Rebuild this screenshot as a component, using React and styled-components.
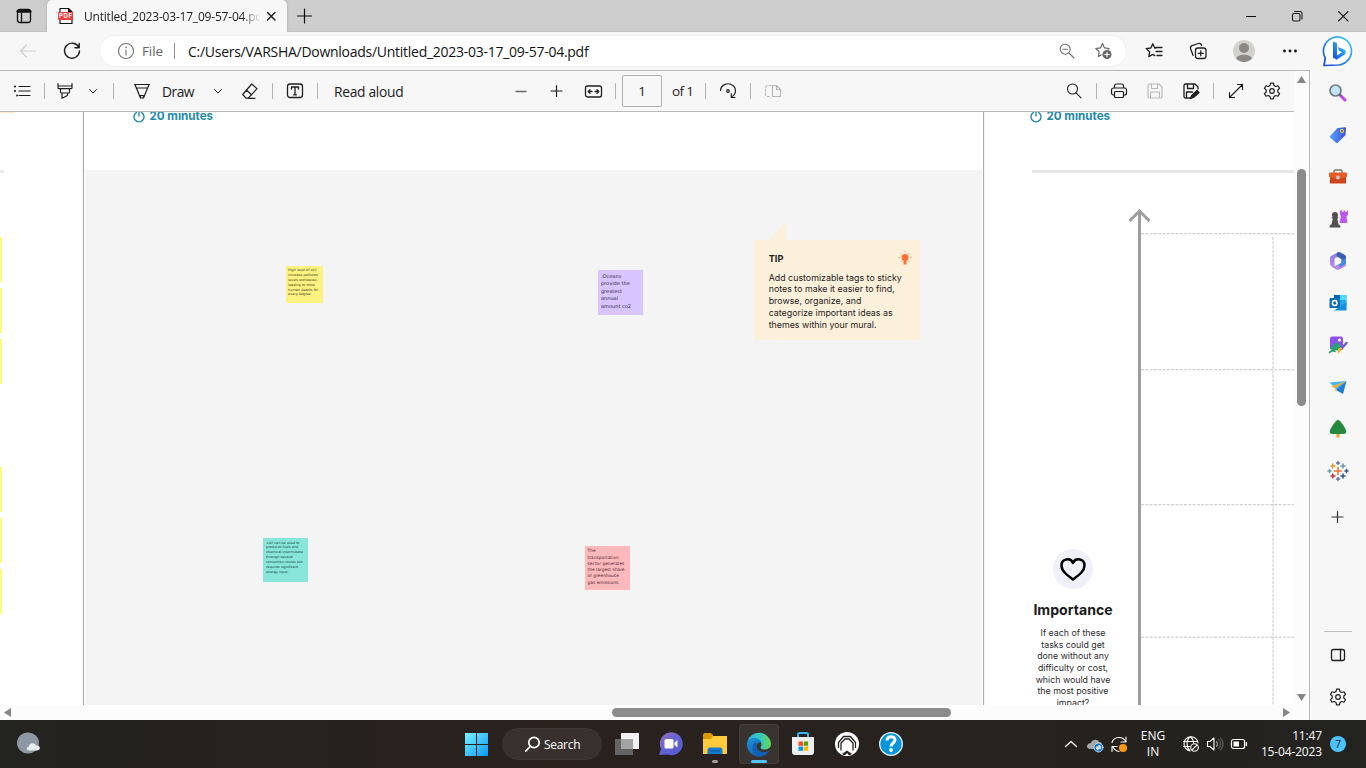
import React from 'react';
import styled, { createGlobalStyle } from 'styled-components';

const Global = createGlobalStyle`
  * { box-sizing: border-box; }
  body { margin: 0; overflow: hidden; background: #f7f7f7; }
  svg { display: block; flex: none; overflow: visible; }
`;

const ui = `'Open Sans', 'Noto Sans', sans-serif`;
const mural = `Inter, 'Liberation Sans', sans-serif`;

const Window = styled.div`
  width: 1366px; height: 768px; display: flex; flex-direction: column;
  font-family: ${ui}; color: #1b1b1b; background: #f7f7f7; overflow: hidden;
`;
const Icon = styled.svg.attrs(p => ({ width: p.$w || 20, height: p.$h || 20, viewBox: `0 0 ${p.$w || 20} ${p.$h || 20}` }))`
  margin-left: ${p => p.$ml ?? 0}px; margin-top: ${p => p.$mt ?? 0}px;
  fill: none; stroke: ${p => p.$c || '#1f1f1f'}; stroke-width: ${p => p.$sw || 1.1};
  stroke-linecap: ${p => p.$cap || 'round'}; stroke-linejoin: round;
`;
const Label = styled.span`
  flex: none; white-space: nowrap; margin-left: ${p => p.$ml || 0}px; width: ${p => p.$w}px;
  font-size: ${p => p.$size || 13.8}px; letter-spacing: ${p => p.$ls || 0}px; color: ${p => p.$c || '#1b1b1b'};
`;
const Divider = styled.span`
  flex: none; width: 1px; height: ${p => p.$h || 16}px; background: ${p => p.$c || '#b3b3b3'}; margin-left: ${p => p.$ml}px;
`;
const Spacer = styled.span`flex: ${p => (p.$w ? `0 0 ${p.$w}px` : '1')};`;

const TabStrip = styled.header`
  height: 32px; flex: none; display: flex; align-items: center; background: #cdcdcd;
  box-shadow: inset 0 -1px 0 #c2c2c2;
`;
const Tab = styled.div`
  margin-left: 13px; width: 240px; height: 32px; display: flex; align-items: center;
  background: #f7f7f7; border-radius: 5px 5px 0 0; z-index: 1; box-shadow: 0 0 2px #0004; clip-path: inset(0 -3px 0 -3px);
`;
const TabTitle = styled(Label)`
  overflow: hidden; mask-image: linear-gradient(90deg, #000 158px, transparent 176px);
`;
const AddressRow = styled.div`height: 38px; flex: none; display: flex; align-items: center;`;
const AddressPill = styled.div`
  margin-left: 18px; width: 1026px; height: 30px; border-radius: 15px; background: #fff;
  display: flex; align-items: center; box-shadow: 0 0 3px #00000012;
`;
const Body = styled.div`height: 650px; flex: none; display: flex;`;
const Viewer = styled.main`
  width: 1310px; border-top: 1px solid #b8b8b8; border-right: 1px solid #b8b8b8; display: flex; background: #fcfcfc;
`;
const Document = styled.div`width: 1294px; display: flex; flex-direction: column;`;
const PdfBar = styled.div`
  height: 41px; flex: none; display: flex; align-items: center; background: #f7f7f7; border-bottom: 1px solid #b8b8b8;
`;
const PageBox = styled.div`
  flex: none; width: 40px; height: 32px; margin-left: 6px; border: 1px solid #b0b0b0; border-radius: 2px;
  display: flex; align-items: center; justify-content: center; font-size: 13.5px;
`;
const Page = styled.div`
  height: 593px; flex: none; display: flex; position: relative; overflow: hidden; background: #fff; font-family: ${mural};
`;
const LeftPanel = styled.section`width: 83px; flex: none;`;
const Strip = styled.div`
  width: ${p => p.$w}px; height: ${p => p.$h}px; background: ${p => p.$bg}; margin-top: ${p => p.$mt || 0}px;
`;
const Board = styled.section`
  width: 901px; flex: none; border: solid #acacac; border-width: 0 1px; box-shadow: 0 0 1px #bbb; padding: 0 1px;
`;
const BoardHead = styled.div`height: 58px; padding-left: ${p => p.$pl}px; display: flex;`;
const Timer = styled.div`
  display: flex; align-items: center; height: 7px; gap: 4.5px; color: #2189ab; font-size: 11.6px; font-weight: 700;
  white-space: nowrap;
`;
const BoardArea = styled.div`height: 535px; background: #f4f4f4;`;
const RightPanel = styled.section`width: 310px; flex: none;`;
const Rule = styled.div`height: 3px; margin-left: 48px; background: #e6e6e6;`;
const MatrixRow = styled.div`display: flex; height: 532px;`;
const Axis = styled.div`
  width: 154px; flex: none; padding: 375.5px 21px 0 45px; display: flex; flex-direction: column; align-items: center;
`;
const HeartBadge = styled.div`
  width: 40px; height: 40px; border-radius: 50%; background: #f0f0fa; display: flex; align-items: center; justify-content: center; flex: none;
`;
const AxisTitle = styled.div`
  margin-top: 12.5px; font-size: 14.1px; line-height: 18px; font-weight: 700; color: #1b1b1b; white-space: nowrap;
`;
const AxisText = styled.div`
  margin-top: 8px; font-size: 8.8px; line-height: 11.65px; text-align: center; white-space: nowrap; color: #2b2b2b;
`;
const Sticky = styled.div`
  position: absolute; left: ${p => p.$x}px; top: ${p => p.$y}px; width: ${p => p.$s}px; height: ${p => p.$s}px;
  background: ${p => p.$bg}; padding: ${p => p.$pt}px 0 0 2.6px; font-size: ${p => p.$f}px; line-height: ${p => p.$lh}px;
  font-family: 'DejaVu Sans', 'Liberation Sans', sans-serif; white-space: nowrap; color: ${p => p.$c};
`;
const Tip = styled.div`
  position: absolute; left: 754.4px; top: 127.5px; width: 165.4px; height: 100px; background: #fdf0da;
  padding: 13px 0 0 14.3px; font-size: 8.85px; line-height: 11.7px; color: #1d1d1d; white-space: nowrap;
`;
const TipPointer = styled.svg`position: absolute; left: 15px; top: -17.5px;`;
const TipBulb = styled.svg`position: absolute; right: 8px; top: 11px;`;
const TipTitle = styled.div`font-weight: 700; font-size: 9.2px; margin-bottom: 7.5px;`;

const HScroll = styled.div`height: 15px; flex: none; display: flex; align-items: center;`;
const VScroll = styled.div`width: 15px; display: flex; flex-direction: column; align-items: center;`;
const Thumb = styled.div`
  flex: none; border-radius: 5px; background: #8b8b8b; width: ${p => p.$w}px; height: ${p => p.$h}px;
  margin: ${p => p.$m};
`;
const Sidebar = styled.aside`
  width: 56px; display: flex; flex-direction: column; align-items: center; padding-top: 12.5px; gap: 22px;
`;
const SideRule = styled.div`width: 28px; height: 1px; background: #bdbdbd; margin-top: 82px; margin-bottom: -9px;`;

const Taskbar = styled.footer`
  height: 48px; flex: none; background: linear-gradient(90deg, #23231f, #2a211d 40%, #28221e 60%, #23231f); display: flex; align-items: center; color: #fff;
`;
const SearchPill = styled.div`
  width: 100px; height: 32px; border-radius: 16px; margin: 0 1px 0 13px; background: #37302d; border: 1px solid #3d3734;
  display: flex; align-items: center;
`;
const AppSlot = styled.div`
  width: 40px; height: 40px; margin-left: 4px; border-radius: 4px; display: flex; align-items: center; justify-content: center;
  position: relative; background: ${p => (p.$active ? '#3a3431' : 'transparent')}; box-shadow: ${p => (p.$active ? 'inset 0 0 0 1px #433d3a' : 'none')};
  &::after {
    content: ''; position: absolute; bottom: 1px; height: 3px; border-radius: 2px;
    width: ${p => (p.$active ? 16 : p.$open ? 6 : 0)}px; background: ${p => (p.$active ? '#4cc2ff' : '#a09c9a')};
  }
`;
const TwoLine = styled.div`
  flex: none; width: ${p => p.$w}px; margin-left: ${p => p.$ml}px; font-size: 12px; line-height: 16px; text-align: ${p => p.$align};
  letter-spacing: ${p => p.$ls || 0}px; white-space: nowrap;
`;
const Count = styled.div`
  width: 16px; height: 16px; margin-left: 8px; border-radius: 50%; background: #4cc2ff; color: #111; font-size: 10px;
  line-height: 16px; text-align: center;
`;

const gearPath = 'M8.6 2.2h2.8l.6 2.3 1.7 1 2.3-.7 1.5 2.6-1.7 1.6v2l1.7 1.6-1.5 2.6-2.3-.7-1.7 1-.6 2.3H8.6L8 15.500l-1.700-1-2.300.7-1.500-2.600L4.200 11V9L2.500 7.400 4 4.800l2.300.7 1.700-1z';
const Gear = p => <Icon {...p}><path d={gearPath} /><circle cx="10" cy="10" r="2.300" /></Icon>;
const Chevron = p => <Icon $w={10} $h={10} $sw={1} {...p}><path d="M1.500 3.500 5 7l3.500-3.500" /></Icon>;
const Search = p => <Icon {...p}><circle cx="8.500" cy="8" r="5" /><path d="m12 11.800 5 5" /></Icon>;
const Plus = p => <Icon $sw={1.2} {...p}><path d="M9.500 4.500v11M4 10h11" /></Icon>;
const starPath = 'm8.500 2.500 2 4.400 4.700.6-3.400 3.300.8 4.700-4.100-2.300-4.100 2.300.8-4.700L1.800 7.500l4.700-.6z';

function BrowserTabs() {
  return (
    <TabStrip>
      <Icon $ml={14} $sw={1.3} $c="#111"><rect x="3.500" y="3.500" width="13" height="13" rx="2.500" /><path d="M4 5.200h12" strokeWidth="3" /><path d="M7.500 6v10" /></Icon>
      <Tab>
        <Icon $ml={10} $w={18} $h={18} $sw={1.2}>
          <path d="M3 5V1.500h8.500L15 5v11.500H3V13" fill="#fff" stroke="#111" /><path d="M11 1.500V5h4z" fill="#111" stroke="none" />
          <rect x="1" y="5" width="15" height="8" rx="1" fill="#f23c3c" stroke="none" />
          <text x="2" y="11.300" fontSize="6" fontWeight="700" fill="#fff" stroke="none" fontFamily="Inter" textLength="13">PDF</text>
        </Icon>
        <TabTitle $ml={9} $w={176} $size={12} $ls={-0.2}>Untitled_2023-03-17_09-57-04.pdf</TabTitle>
        <Icon $ml={1} $sw={1.5}><path d="m6.500 6.500 7.500 7.500M14 6.500 6.500 14" /></Icon>
      </Tab>
      <Icon $ml={8} $sw={1.2} $c="#111"><path d="M9.500 3v14M2.500 10h14" /></Icon>
      <Spacer />
      <Icon $sw={1} $c="#111" $cap="butt"><path d="M5 10.500h10" /></Icon>
      <Icon $ml={26}><rect x="5.500" y="7.500" width="7.500" height="7.500" rx="1.500" /><path d="M7.500 5.500h5.500a2 2 0 0 1 2 2v5.500" /></Icon>
      <Icon $ml={26}><path d="m5.500 5.500 9.500 9.500M15 5.500 5.500 15" /></Icon>
      <Spacer $w={13} />
    </TabStrip>
  );
}

function AddressBar() {
  return (
    <AddressRow>
      <Icon $ml={18} $c="#cfcfcf"><path d="M17.500 10h-15m6-6-6 6 6 6" /></Icon>
      <Icon $ml={24} $sw={1.4}><path d="M16.800 6.500A7.500 7.500 0 1 0 17.500 10M17.200 2.500v4.300H13" /></Icon>
      <AddressPill>
        <Icon $ml={16} $c="#707070"><circle cx="10" cy="10" r="7.500" /><path d="M10 9v5" /><path d="M10 6.300v.1" strokeWidth="1.500" /></Icon>
        <Label $ml={6} $w={22} $c="#666" $size={13.5} $ls={-0.1}>File</Label>
        <Divider $ml={10} $c="#8f8f8f" />
        <Label $ml={13} $w={402} $c="#111" $size={14} $ls={-0.27}>C:/Users/VARSHA/Downloads/Untitled_2023-03-17_09-57-04.pdf</Label>
        <Spacer />
        <Icon $c="#707070"><circle cx="8.200" cy="8.200" r="5" /><path d="m12 12 5 5M6 8.200h4.500" /></Icon>
        <Icon $ml={16} $c="#606060"><path d={starPath} transform="translate(1 0)" /><circle cx="14" cy="13.500" r="5.300" fill="#fff" stroke="none" /><circle cx="14" cy="13.500" r="4.500" fill="#666" stroke="none" /><path d="M14 11.200v4.600M11.700 13.500h4.600" stroke="#fff" /></Icon>
        <Spacer $w={13} />
      </AddressPill>
      <Icon $ml={18} $sw={1.3}><path d="M12 7 10.700 7 8.800 2.800 6.800 7 2.200 7.600l3.400 3.200-.8 4.800 4-2.200 2 1.200M12 6.500h6M12 10.500h6M13 14.500h5" /></Icon>
      <Icon $ml={24} $sw={1.3}><rect x="7.500" y="7" width="10.500" height="10.500" rx="2.500" /><path d="M12.800 9.800v5M10.300 12.300h5M5 14.300 2.600 7.800C2 6 2.700 5.200 4 4.600l6.300-2.100c1.500-.5 2.800.3 3.200 1.800" /></Icon>
      <Icon $ml={25} $w={22} $h={22}><circle cx="11" cy="11" r="11" fill="#d3d1ce" stroke="none" /><circle cx="11" cy="8" r="5" fill="#8b8784" stroke="none" /><path d="M3 18.500c2-5 14-5 16 0a11 11 0 0 1-16 0z" fill="#8b8784" stroke="none" /></Icon>
      <Icon $ml={25}><g fill="#111" stroke="none"><circle cx="4.500" cy="10" r="1.400" /><circle cx="10" cy="10" r="1.400" /><circle cx="15.500" cy="10" r="1.400" /></g></Icon>
      <Icon $ml={23} $w={30} $h={30}>
        <defs><linearGradient id="bing" x1="0" y1="1" x2="1" y2="0"><stop stopColor="#1744d8" /><stop offset=".5" stopColor="#258df0" /><stop offset="1" stopColor="#42d3e8" /></linearGradient></defs>
        <path d="M1 29.500 2.300 22A14 14 0 1 1 15.500 29z" fill="#fff" stroke="url(#bing)" strokeWidth="1.700" />
        <path d="M10 5.500l4 1.500v12.500l5-3.200-3-1.500-1.200-3.800 7.700 3v4l-9 5.700-3.500-2.200z" fill="url(#bing)" stroke="none" />
      </Icon>
    </AddressRow>
  );
}

function PdfToolbar() {
  return (
    <PdfBar>
      <Icon $ml={12} $sw={1.2}><path d="M7 5.500h11M7 10h11M7 14.500h11" /><g fill="#222" stroke="none"><circle cx="3" cy="5.500" r="1.100" /><circle cx="3" cy="10" r="1.100" /><circle cx="5" cy="14.500" r="1" /></g></Icon>
      <Divider $ml={12} />
      <Icon $ml={10} $sw={1.2}><path d="M3 2.500v4.200c0 .6.400 1 1 1h12c.6 0 1-.4 1-1V2.500M5.500 8v3c0 .6.400 1 1 1h7c.6 0 1-.4 1-1V8M7 12.200v5l5.500-2.700v-2.300M3.500 5h13" /></Icon>
      <Chevron $ml={13} />
      <Divider $ml={15} />
      <Icon $ml={18} $sw={1.2}><path d="M2.500 3.500h15M3 3.500l1.200 3L8.500 17h3l4.300-10.500 1.200-3M4.300 7h11.400M8.500 14.500v2.500h3v-2.500z" /></Icon>
      <Label $ml={10} $w={32} $ls={-0.5}>Draw</Label>
      <Chevron $ml={19} />
      <Icon $ml={17} $sw={1.2}><path d="m11.700 3 5.300 4.700-8.800 9.500H6L2.700 13.500zM6.300 9l5.300 4.800M8.500 17.300H15" /></Icon>
      <Divider $ml={12} />
      <Icon $ml={12} $sw={1.3}><rect x="2.500" y="3" width="15" height="13.500" rx="2.500" /><path d="M6.500 8V6h7v2M10 6v7.800M8.500 13.800h3" /></Icon>
      <Divider $ml={12} />
      <Label $ml={16} $w={70} $ls={-0.3}>Read aloud</Label>
      <Icon $ml={107} $sw={1.3}><path d="M5 10.500h10" stroke="#666" /></Icon>
      <Plus $ml={16} />
      <Icon $ml={16} $sw={1.3}><rect x="2.500" y="5" width="16" height="11" rx="2" /><path d="M5.500 10.500H9M12 10.500h3.500M7 8.800l-1.800 1.700L7 12.200M14 8.800l1.800 1.700-1.800 1.700" /></Icon>
      <Divider $ml={12} />
      <PageBox>1</PageBox>
      <Label $ml={10} $w={21} $size={13.5} $ls={-0.6}>of 1</Label>
      <Divider $ml={12} />
      <Icon $ml={12} $sw={1.2}><path d="M2.500 9.500A7.500 7 0 1 1 13.500 16M13.300 12.500v4h3.800" /><circle cx="10" cy="10" r="1.300" /></Icon>
      <Divider $ml={12} />
      <Icon $ml={12} $c="#b5b5b5"><path d="M8 4.500H4.500a2 2 0 0 0-2 2v7a2 2 0 0 0 2 2H8" strokeDasharray="2 2" /><path d="M9.500 4.500h4l4 4v7h-8zM13.500 4.500v4h4" /></Icon>
      <Spacer />
      <Search />
      <Divider $ml={12} />
      <Icon $ml={12} $sw={1.2}><path d="M5.500 7V5a2 2 0 0 1 2-2h5a2 2 0 0 1 2 2v2M5 14H4.500a2 2 0 0 1-2-2V9a2 2 0 0 1 2-2h11a2 2 0 0 1 2 2v3a2 2 0 0 1-2 2H15" /><rect x="5.500" y="10.500" width="9" height="6" rx="1" /></Icon>
      <Icon $ml={16} $c="#b8b8b8"><path d="M3 4.500A1.500 1.500 0 0 1 4.500 3H14l3 3v9.500a1.500 1.500 0 0 1-1.500 1.500h-11A1.500 1.500 0 0 1 3 15.500zM6.500 3v4.500h6V3M5.500 17v-6h9v6" /></Icon>
      <Icon $ml={16} $sw={1.3}><path d="M9 17H4.500A1.500 1.500 0 0 1 3 15.500v-11A1.500 1.500 0 0 1 4.500 3H14l3 3v2M6.500 3v4.500h6V3M5.500 17v-6h6" /><path d="m9.500 17.500 1-2.700 5.500-5.300 2 2-5.500 5z" fill="#222" /></Icon>
      <Divider $ml={12} />
      <Icon $ml={12} $sw={1.2}><path d="m3.500 16.500 13-13M11.500 3.500h5v5M3.500 11.500v5h5" /></Icon>
      <Gear $ml={16} $sw={1.2} />
      <Spacer $w={12} />
    </PdfBar>
  );
}

const Clock = () => (
  <Icon $w={12} $h={12} $c="#2189ab" $sw={1.4}><path d="M3.500 2.500a5 5 0 1 0 5 0M6 1v5" /></Icon>
);

const notes = [
  { x: 285.5, y: 154, s: 37, bg: '#fdf17f', f: 3.4, lh: 4.82, pt: 2.3, c: '#3a3722', text: ['High level of co2', 'increase pollution', 'levels worldwide,', 'leading to more', 'human deaths for', 'every degree'] },
  { x: 598.3, y: 158.3, s: 44.5, bg: '#d8c5ff', f: 5.05, lh: 7.45, pt: 2.7, c: '#2f293f', text: ['.Oceans', 'provide the', 'greatest', 'annual', 'amount co2'] },
  { x: 263.4, y: 425.5, s: 44.5, bg: '#87e6d9', f: 3.4, lh: 4.85, pt: 3, c: '#1b403b', text: ['.co2 can be used to', 'produces fuels and', 'chemical intermidiate', 'through several', 'convertion routes but', 'requires significant', 'energy input.'] },
  { x: 585, y: 433.5, s: 44.5, bg: '#ffb9bd', f: 4.35, lh: 6.25, pt: 2.8, c: '#472a2c', text: ['The', 'transportation', 'sector generates', 'the largest share', 'of greenhouse', 'gas emissions.'] },
];
const Lines = ({ of }) => of.map(t => <div key={t}>{t}</div>);

function MuralPage() {
  return (
    <Page>
      <LeftPanel>
        <Strip $w={14} $h={1} $bg="#fdebc8" />
        <Strip $w={4} $h={3} $bg="#e8e8e8" $mt={57} />
        <Strip $w={2} $h={45} $bg="#fdfb7c" $mt={64.3} />
        <Strip $w={2} $h={45} $bg="#fdfb7c" $mt={6} />
        <Strip $w={2} $h={45} $bg="#fdfb7c" $mt={6} />
        <Strip $w={2} $h={45} $bg="#fdfb7c" $mt={82.3} />
        <Strip $w={2} $h={45} $bg="#fdfb7c" $mt={6} />
        <Strip $w={2} $h={45} $bg="#fdfb7c" $mt={6} />
      </LeftPanel>
      <Board>
        <BoardHead $pl={48}><Timer><Clock />20 minutes</Timer></BoardHead>
        <BoardArea />
      </Board>
      <RightPanel>
        <BoardHead $pl={46}><Timer><Clock />20 minutes</Timer></BoardHead>
        <Rule />
        <MatrixRow>
          <Axis>
            <HeartBadge><Icon $w={28} $h={28} $c="#000" $sw={2.5}><path d="M14 24.500C8 20 2.500 16 2.500 10.500A6 6 0 0 1 14 8a6 6 0 0 1 11.500 2.500C25.500 16 20 20 14 24.500z" /></Icon></HeartBadge>
            <AxisTitle>Importance</AxisTitle>
            <AxisText><Lines of={['If each of these', 'tasks could get', 'done without any', 'difficulty or cost,', 'which would have', 'the most positive', 'impact?']} /></AxisText>
          </Axis>
          <Icon $w={156} $h={532} $c="#9d9d9d" $sw={3} $cap="butt">
            <path d="M1.500 38v500" /><path d="M-8.500 48 1.500 38l10 10" strokeLinejoin="miter" />
            <path d="M3 60.700h153M3 196.700h153M3 331.700h153M3 464.200h153M135 64v470" stroke="#c6c6c6" strokeWidth="1" strokeDasharray="3 1.300" />
          </Icon>
        </MatrixRow>
      </RightPanel>
      {notes.map(n => (
        <Sticky key={n.bg} $x={n.x} $y={n.y} $s={n.s} $bg={n.bg} $f={n.f} $lh={n.lh} $pt={n.pt} $c={n.c}><Lines of={n.text} /></Sticky>
      ))}
      <Tip>
        <TipPointer width="17" height="18"><path d="M0 18 17 0v18z" fill="#fdf0da" /></TipPointer>
        <TipBulb width="14" height="15" viewBox="0 0 14 15"><circle cx="7" cy="6.500" r="3.500" fill="#ff7139" /><path d="M5.500 9h3v4.500h-3z" fill="#ff7139" /><path d="M7 0v1.500M2.500 2l1 1M11.500 2l-1 1M.5 6.500H2M12 6.500h1.500M2.500 11l1-1M11.500 11l-1-1" stroke="#ff9d73" fill="none" /></TipBulb>
        <TipTitle>TIP</TipTitle>
        <Lines of={['Add customizable tags to sticky', 'notes to make it easier to find,', 'browse, organize, and', 'categorize important ideas as', 'themes within your mural.']} />
      </Tip>
    </Page>
  );
}

function EdgeSidebar() {
  return (
    <Sidebar>
      <Icon><path d="m11 11 6 6" stroke="#c23ff0" strokeWidth="3" /><path d="m11 11 1.500 1.500" stroke="#666" strokeWidth="2" /><circle cx="7.500" cy="7.500" r="5.500" fill="#bfe5fa" stroke="#737a80" strokeWidth="1.700" /></Icon>
      <Icon><defs><linearGradient id="tag"><stop stopColor="#5aa4f8" /><stop offset="1" stopColor="#3c50dc" /></linearGradient></defs><path d="m2 11 7.500-8L17 2.300c.8 0 1 .3 1 1L17.500 10l-7.500 7.500c-.8.8-1.500.8-2.300 0L2 12.500c-.5-.5-.5-1 0-1.500z" fill="url(#tag)" stroke="none" /><circle cx="14" cy="6" r="1.500" fill="#405ab8" stroke="#ffd72e" /></Icon>
      <Icon><path d="M6 6V4.500C6 3.500 6.500 3 7.500 3h5c1 0 1.500.5 1.500 1.500V6" stroke="#777" strokeWidth="1.500" /><path d="M2 16.500h16V9H2z" fill="#cf431d" stroke="none" /><path d="M1 6.500q0-1 1-1h16q1 0 1 1V10q-9 3-18 0z" fill="#e85d26" stroke="none" /><circle cx="10" cy="10.500" r="1.900" fill="#c6ccd0" stroke="none" /></Icon>
      <Icon><path d="M12 1.500h2V3h1.500V1.500h1.700V3H19V1.500h1V6l-1.500 1 .8 7H11.500L13 7l-1-1z" fill="#bd57f0" stroke="none" /><g fill="#505050" stroke="none"><circle cx="7" cy="6" r="3" /><path d="M5 8.500h4l1.500 7H3.500zM1.500 18.500q0-3 2-3h7q2 0 2 3z" /><rect x="3.700" y="8" width="6.600" height="1.500" rx=".7" /></g></Icon>
      <Icon>
        <defs><linearGradient id="office" x1="0" y1="0" x2="0" y2="1"><stop stopColor="#8a7cf0" /><stop offset="1" stopColor="#b98ce0" /></linearGradient></defs>
        <g stroke="none">
          <path d="M10.500 1 4 4.500C2.500 5.300 2 6 2 7.500v5c0 1.500.5 2 2 3l2.500 1.300V8.300q0-1 1-1.500L13 4z" fill="url(#office)" />
          <path d="M10 1q1-.3 2 .2L17 4q1 .7 1 2v6.500l-4.500-2V8.300L9 5.500q-1-3 1-4.500z" fill="#3a5fae" />
          <path d="M18 9v4.500q0 1.300-1 2l-5.500 3q-1.500.7-3 0L3.500 15.700l6.500-2 4-3.200z" fill="#b48ae0" />
          <path d="M18 7v5.500L12.500 16 10 14l3.500-2V9z" fill="#418bdf" />
          <path d="m10 6.700 3 1.700v3.300l-3 1.700-3-1.700V8.400z" fill="#f7f7f7" />
        </g>
      </Icon>
      <Icon><g stroke="none"><rect x="6" y="2" width="12.500" height="11" fill="#28a8ea" /><path d="M12 2h6.500v5H12z" fill="#50d9ff" /><path d="M6 2h6v5H6z" fill="#0364b8" /><path d="M6 17.500h12.500V9L12 13.500z" fill="#1490df" /><rect x="1.500" y="5" width="10.500" height="10" rx="1" fill="#0f6cbd" /></g><ellipse cx="6.700" cy="10" rx="2.300" ry="2.500" stroke="#fff" strokeWidth="1.500" /></Icon>
      <Icon><rect x="2" y="1.500" width="13" height="13" rx="2" fill="#8d52ee" stroke="none" /><path d="m2 13 5.500-5c1-1 2-1 3 0l5 6q-5 3-13.500 0z" fill="#25a26f" stroke="none" /><circle cx="11.500" cy="5" r="1.500" fill="#fff" stroke="none" /><path d="m18.500 8-5.500 6" stroke="#7556dc" strokeWidth="2.500" /><path d="m13.500 13.500-3 4.500q-.5-4 1.500-5z" fill="#ffad21" stroke="#ffad21" /><path d="M1.500 17.500q3-3 5.500-1" stroke="#22986a" strokeWidth="1.600" /></Icon>
      <Icon><path d="M1.500 5.500 18.500 4 9 13z" fill="#42b8f4" stroke="none" /><path d="M18.500 4 15 17l-7-4z" fill="#237bd8" stroke="none" /><path d="M3 9.500 18.500 4 7.500 11v5l-1-5z" fill="#ffae25" stroke="none" /></Icon>
      <Icon><path d="M8.500 14h3v4.500h-3z" fill="#f6a221" stroke="none" /><path d="M8 2q2-2 4 0 3.500 4 5.500 8 2.500 5-2.500 5H5q-5 0-2.500-5Q4.500 6 8 2z" fill="#24893e" stroke="none" /></Icon>
      <Icon $sw={1.5}><path d="M10 6.500v7M6.500 10h7" stroke="#eb7330" /><path d="M10 .5v3M8.500 2h3M10 16.500v3M8.500 18h3" stroke="#6075a8" /><path d="M4.800 3v4M3 5h4" stroke="#e59a2d" /><path d="M15 3v4M13 5h4M1.500 8.500v3M0 10h3" stroke="#679ba8" /><path d="M4.800 13v4M3 15h4" stroke="#c63245" /><path d="M15 13v4M13 15h4M18.500 8.500v3M17 10h3" stroke="#31558d" /></Icon>
      <Plus $mt={4.5} $c="#333" />
      <SideRule />
      <Icon $sw={1.3}><rect x="3.500" y="4.500" width="13" height="11" rx="2" /><path d="M12.500 4.500v11" /></Icon>
      <Gear $sw={1.2} />
    </Sidebar>
  );
}

function WindowsTaskbar() {
  return (
    <Taskbar>
      <Icon $ml={16} $w={25} $h={24}><ellipse cx="12" cy="11" rx="11" ry="10.500" fill="#8e98a3" stroke="none" /><path d="M13 18.500c-3 0-3-4 0-4 0-4 6-4 7-1 5-.5 5 5 1 5z" fill="#e8edf1" stroke="none" /></Icon>
      <Icon $ml={423} $w={25} $h={24}><defs><linearGradient id="win" x1="0" y1="0" x2="1" y2="1"><stop stopColor="#7af3ff" /><stop offset="1" stopColor="#0798f8" /></linearGradient></defs><path d="M1 1h11v11H1zM13 1h11v11H13zM1 13h11v11H1zM13 13h11v11H13z" fill="url(#win)" stroke="none" /></Icon>
      <SearchPill>
        <Icon $ml={20} $c="#fff" $sw={1.7}><circle cx="11" cy="8.500" r="5.200" /><path d="m7.200 12.500-4.500 4.700" /></Icon>
        <Label $ml={1} $w={40} $c="#fff" $size={12} $ls={-0.3}>Search</Label>
      </SearchPill>
      <AppSlot><Icon $w={24} $h={24}><path d="M6 1h18v16H6z" fill="#f2f2f2" stroke="none" /><path d="M0 7h18v16H0z" fill="#636363" stroke="none" /><path d="M6 7h12v10H6z" fill="#a3a3a3" stroke="none" /></Icon></AppSlot>
      <AppSlot><Icon $w={24} $h={24}><defs><linearGradient id="chat" x1="0" y1="0" x2="1" y2="1"><stop stopColor="#956eb5" /><stop offset=".5" stopColor="#6264d6" /><stop offset="1" stopColor="#5055c9" /></linearGradient></defs><path d="M0 23 2 17A11.500 11.500 0 1 1 8 22.500z" fill="url(#chat)" stroke="none" /><rect x="5.500" y="7" width="9" height="9.500" rx="1.500" fill="#fff" stroke="none" /><path d="m15.500 10.500 3-2.500v7.500l-3-2.500z" fill="#fff" stroke="none" /></Icon></AppSlot>
      <AppSlot $open><Icon $w={24} $h={24}><path d="M0 3q0-2 2-2h6l2 2v7H0z" fill="#dc9700" stroke="none" /><path d="M0 7h8l2-3h14v18H0z" fill="#ffca3c" stroke="none" /><path d="M4.500 22v-4q0-2.500 2.500-2.500h10q2.500 0 2.500 2.500v4z" fill="#147bce" stroke="none" /><path d="M7.500 19h9" stroke="#0b62ac" strokeWidth="1.500" /></Icon></AppSlot>
      <AppSlot $active><Icon $w={24} $h={24}>
        <defs><linearGradient id="edgeTop"><stop stopColor="#2fb6e8" /><stop offset=".6" stopColor="#38cbb6" /><stop offset="1" stopColor="#68d94b" /></linearGradient><linearGradient id="edgeLow" x1="0" y1="0" x2="1" y2="1"><stop stopColor="#1b96dc" /><stop offset="1" stopColor="#104b9c" /></linearGradient></defs>
        <path d="M.5 9.500A12 12 0 0 1 24 11.500c0 4-3 6-6.500 6-3 0-4-1-4-2 0-.7 1-1.200 1-3 0-3-3-5-7-5-4 0-7 2-7 2z" fill="url(#edgeTop)" stroke="none" />
        <path d="M0 12c0-4 3.500-6 7-6 4 0 7.500 2.500 7.500 6 0-2-5-2.500-5 2.500 0 4 4.500 6.500 8 6 2.500-.3 4-1.500 4.700-1.500A12 12 0 0 1 0 12z" fill="url(#edgeLow)" stroke="none" />
        <path d="M8.500 10c-6 4-2.500 13 4.500 14 4 0 7.500-2.500 9.500-5.500-7 4-15 0-13-6z" fill="#1260b4" stroke="none" />
      </Icon></AppSlot>
      <AppSlot><Icon $w={24} $h={24}><path d="M7 5V2.500Q7 1 8.500 1h7Q17 1 17 2.500V5" stroke="#35b5ef" strokeWidth="2" /><path d="M1 5h22v15q0 3-3 3H4q-3 0-3-3z" fill="#efefef" stroke="none" /><g stroke="none"><path d="M7.500 9.500H12v4.300H7.500z" fill="#f25022" /><path d="M12.800 9.500h4.300v4.300h-4.300z" fill="#57a300" /><path d="M7.500 14.600H12v4.200H7.500z" fill="#0098e8" /><path d="M12.800 14.600h4.300v4.200h-4.300z" fill="#ffb900" /></g></Icon></AppSlot>
      <AppSlot><Icon $w={24} $h={24} $cap="butt">
        <circle cx="12" cy="12" r="12" fill="#fff" stroke="none" />
        <path d="M3.500 16v-5.500L8.500 4.500h7l5 6V16" stroke="#25221f" strokeWidth="1.300" strokeLinejoin="miter" />
        <path d="M6 18.500V11l4-4h4l4 4v7.500" stroke="#25221f" strokeWidth="1.300" strokeLinejoin="miter" />
        <path d="m7 22 5-3.500L17 22l-1.500 1h-7z" fill="#25221f" stroke="none" /><path d="m9.500 24 2.500-3 2.500 3z" fill="#fff" stroke="none" />
      </Icon></AppSlot>
      <AppSlot><Icon $w={24} $h={24}><circle cx="12" cy="12" r="11.300" fill="#0795d9" stroke="#e8f4fb" strokeWidth="1.300" /><path d="M8 8.500c0-5 8-5 8-.5 0 3-4 3-4 6.500" stroke="#fff" strokeWidth="3" strokeLinecap="butt" /><circle cx="12" cy="18" r="1.900" fill="#fff" stroke="none" /></Icon></AppSlot>
      <Spacer />
      <Icon $w={14} $h={14} $c="#fff" $sw={1.3}><path d="m1.500 9.500 5.500-5 5.500 5" /></Icon>
      <Icon $ml={8} $w={18} $h={18}><path d="M4 14c-5-1-3-6 1-6 1-4 7-4 8-1 4 0 5 7 0 7z" fill="#a8a8a8" stroke="none" /><circle cx="12.500" cy="12.500" r="4.500" fill="#1c76c6" stroke="#d8edff" strokeWidth=".8" /><path d="M10.500 12h4l-1.500-1.500M14.500 13.300h-4l1.500 1.500" stroke="#fff" /></Icon>
      <Icon $ml={6} $w={18} $h={18} $c="#fff"><path d="M2 7.500C4 1 13 1 15.500 6.500M16 2v5h-5M2 16.500v-5h5M3 12q2 4 6 4.500" /><circle cx="13" cy="13" r="4" fill="#ff9814" stroke="none" /></Icon>
      <TwoLine $ml={12} $w={26} $align="center">ENG<br />IN</TwoLine>
      <Icon $ml={16} $w={18} $h={18} $c="#fff"><path d="M8 16A7 7.200 0 1 1 16 8M1.500 6.500h14M1.500 11.500H8M8 16C4 12 4 5 8.500 1.500 11 4 11.500 6 11.700 8" /><circle cx="12.500" cy="12.500" r="3.800" /><path d="m10 15 5-5" /></Icon>
      <Icon $ml={6} $w={18} $h={18} $c="#fff"><path d="M1.500 6.500H4L8 3v12l-4-3.500H1.500z" /><path d="M10.500 6.500q2 2.500 0 5" stroke="#aaa" /><path d="M12.500 4.500q4 4.500 0 9M14.500 3q5 6 0 12" stroke="#66625f" /></Icon>
      <Icon $ml={6} $w={18} $h={18} $c="#fff" $sw={1.2}><rect x="1.500" y="4.500" width="13" height="9" rx="2" /><path d="M16.300 7.500v3" strokeWidth="1.500" /><path d="M3.500 6.500H9v5H3.500z" fill="#fff" stroke="none" /></Icon>
      <TwoLine $ml={10} $w={64} $align="right" $ls={-0.15}>11:47<br />15-04-2023</TwoLine>
      <Count>7</Count>
      <Spacer $w={20} />
    </Taskbar>
  );
}

export default function App() {
  return (
    <Window>
      <Global />
      <BrowserTabs />
      <AddressBar />
      <Body>
        <Viewer>
          <Document>
            <PdfToolbar />
            <MuralPage />
            <HScroll>
              <Icon $ml={4} $w={8} $h={9}><path d="M7 0v9L0 4.500z" fill="#858585" stroke="none" /></Icon>
              <Thumb $w={339} $h={9} $m="0 332px 0 600px" />
              <Icon $w={7} $h={9}><path d="M0 0v9l7-4.500z" fill="#858585" stroke="none" /></Icon>
            </HScroll>
          </Document>
          <VScroll>
            <Icon $w={9} $h={12}><path d="M0 12h9L4.500 5z" fill="#858585" stroke="none" /></Icon>
            <Thumb $w={9} $h={237} $m="86px 0 288px" />
            <Icon $w={9} $h={7}><path d="M0 0h9L4.500 7z" fill="#858585" stroke="none" /></Icon>
          </VScroll>
        </Viewer>
        <EdgeSidebar />
      </Body>
      <WindowsTaskbar />
    </Window>
  );
}
